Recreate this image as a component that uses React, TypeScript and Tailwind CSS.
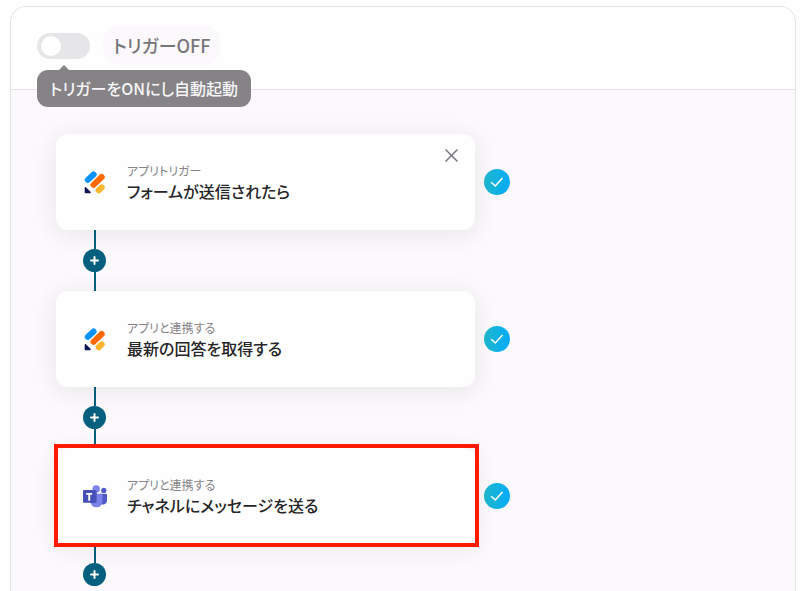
import { Fragment, useState } from "react";

function FormLogo() {
  return (
    <svg viewBox="0 0 24 24" className="size-6" aria-hidden="true">
      <g strokeWidth="6" strokeLinecap="round">
        <path d="M4.800 9.900 10.600 4.500" stroke="#0a93ff" />
        <path d="M10.500 14.800 18.700 7" stroke="#ff6a00" />
        <path d="M15.700 20.200 18.700 17.400" stroke="#ffb42e" />
      </g>
      <path d="M1.700 17.900c0-.8.7-1.100 1.200-.6l4.600 4.500c.5.500.2 1.400-.5 1.400H2.700c-.6 0-1-.4-1-1Z" fill="#0a1551" />
    </svg>
  );
}

function TeamsLogo() {
  return (
    <svg viewBox="0 0 24 24" className="size-6" aria-hidden="true">
      <circle cx="20.800" cy="6.400" r="2.600" fill="#5059c9" />
      <path d="M17 9.800h6a1 1 0 0 1 1 1v5.600a3.900 3.900 0 0 1-7 2.600Z" fill="#5059c9" />
      <circle cx="13.200" cy="5" r="3.700" fill="#7b83eb" />
      <path d="M7.500 9.800h10.700a1.200 1.200 0 0 1 1.200 1.200v6.900a6 6 0 0 1-11.900 0Z" fill="#7b83eb" />
      <path d="M10 6.300h2.700a1.200 1.200 0 0 1 1.200 1.200v10.300a1.200 1.200 0 0 1-1.200 1.200H7.600V9.800H10Z" fill="#5a62c3" />
      <rect x="0" y="6" width="12.600" height="12.800" rx="1" fill="#464eb8" />
      <path d="M3.200 8.900h6v1.800H7.200v6H5.300v-6H3.200Z" fill="#fff" />
    </svg>
  );
}

function StatusBadge() {
  return (
    <span className="flex size-[26px] shrink-0 items-center justify-center rounded-full bg-linear-to-r from-[#20b8cc] to-[#05aaf8]">
      <svg viewBox="0 0 14 12" className="h-3 w-[14px]" fill="none" stroke="#fff" strokeWidth="1.5" role="img" aria-label="完了">
        <path d="M1.200 6.200 5.300 10 12.500 2" />
      </svg>
    </span>
  );
}

function Connector({ last = false }: { last?: boolean }) {
  return (
    <div className="ml-[27px] flex w-[23px] flex-col items-center">
      <span className="h-[19px] w-[2px] bg-[#05607f]" />
      <button type="button" aria-label="ステップを追加" className="flex size-[23px] items-center justify-center rounded-full bg-[#05607f]">
        <svg viewBox="0 0 9 9" className="size-[9px]" stroke="#fff" strokeWidth="2" strokeLinecap="round" aria-hidden="true">
          <path d="M4.500 1v7M1 4.500h7" />
        </svg>
      </button>
      {!last && <span className="h-[19px] w-[2px] bg-[#05607f]" />}
    </div>
  );
}

const steps = [
  { kind: "アプリトリガー", title: "フォームが送信されたら", logo: "form", closable: true, marked: false },
  { kind: "アプリと連携する", title: "最新の回答を取得する", logo: "form", closable: false, marked: false },
  { kind: "アプリと連携する", title: "チャネルにメッセージを送る", logo: "teams", closable: false, marked: true },
];

export default function App() {
  const [on, setOn] = useState(false);
  return (
    <main className="h-screen overflow-hidden bg-[#fefefe] pt-[6px] pr-[13px] pl-[10px] font-['Noto_Sans_CJK_JP',sans-serif] [font-feature-settings:'palt']">
      <section className="min-h-full overflow-hidden rounded-t-2xl border border-b-0 border-[#e3e3e5] bg-[#fbf9fc]">
        <header className="relative flex h-[83px] items-start gap-[13px] border-b border-[#e3e3e5] bg-[#fefefe] pt-[18px] pl-[26px]">
          <label className="relative mt-2 flex h-[26px] w-[53px] items-center rounded-full bg-[#e6e5e8] px-1">
            <input
              type="checkbox"
              role="switch"
              aria-label="トリガー"
              checked={on}
              onChange={(e) => setOn(e.target.checked)}
              className="peer absolute inset-0 appearance-none rounded-full checked:bg-[#05aaf8]"
            />
            <span className="relative size-5 rounded-full bg-white peer-checked:translate-x-6" />
          </label>
          <span className="flex h-10 items-center rounded-2xl bg-[#fbf9fc] px-[10px] text-lg font-medium text-[#77767a]">
            トリガーOFF
          </span>
          <div role="tooltip" className="absolute top-[63px] left-[26px] z-10 rounded-[11px] bg-[#858386] px-[13px] py-[7px] text-base leading-[23px] font-medium text-[#f6f5f7]">
            <svg viewBox="0 0 12 6" className="absolute -top-[5px] left-[21px] h-[6px] w-3" fill="#858386" aria-hidden="true">
              <path d="M0 6 6 0l6 6Z" />
            </svg>
            トリガーをONにし自動起動
          </div>
        </header>

        <div className="pt-11 pl-[45px]">
          {steps.map((step, i) => (
            <Fragment key={step.title}>
              <div className="flex items-center gap-[9px]">
                <article className="relative flex h-24 w-full max-w-[419px] items-center rounded-xl bg-[#fefefe] pl-[27px] shadow-[0_4px_24px_rgba(40,36,48,0.09)]">
                  {step.logo === "form" ? <FormLogo /> : <TeamsLogo />}
                  <div className="ml-5">
                    <p className="text-xs leading-[18px] text-[#858386]">{step.kind}</p>
                    <h2 className="text-base leading-[22px] font-medium text-[#262528]">{step.title}</h2>
                  </div>
                  {step.closable && (
                    <button type="button" aria-label="閉じる" className="absolute top-[15px] right-[17px]">
                      <svg viewBox="0 0 13 13" className="size-[13px]" stroke="#77767a" strokeWidth="1.500" aria-hidden="true">
                        <path d="m.5.5 12 12M12.500.5l-12 12" />
                      </svg>
                    </button>
                  )}
                  {step.marked && <span className="absolute -top-1 -right-1 -bottom-[3px] -left-[2px] border-4 border-[#ff1a00]" />}
                </article>
                <StatusBadge />
              </div>
              <Connector last={i === steps.length - 1} />
            </Fragment>
          ))}
        </div>
      </section>
    </main>
  );
}
